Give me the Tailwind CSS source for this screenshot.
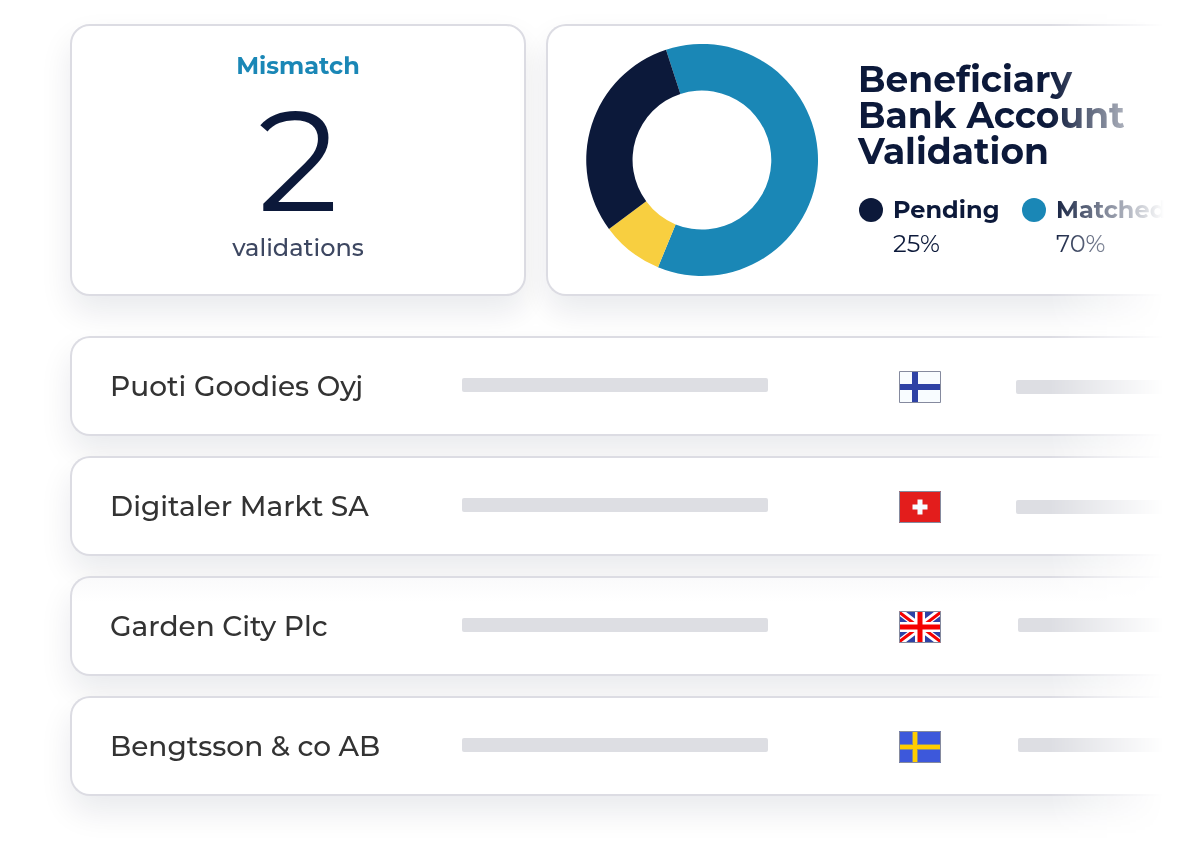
<!DOCTYPE html>
<html lang="en">
<head>
    <meta charset="UTF-8">
    <meta name="viewport" content="width=device-width, initial-scale=1.0">
    <title>Bank Account Validation</title>
    <script src="https://cdn.jsdelivr.net/npm/@tailwindcss/browser@4"></script>
</head>
<body class="bg-white font-['Montserrat','Inter',sans-serif] text-[#0c193a] overflow-x-hidden">
    <!-- Everything fades out towards the right edge -->
    <main class="pl-[70px] pt-6 pb-[60px] [mask-image:linear-gradient(to_right,black_calc(100%-142px),transparent_calc(100%-28px))]">
        <div class="flex gap-5">
            <section class="w-[456px] h-[272px] shrink-0 flex flex-col items-center bg-white border-2 border-[#dcdce3] rounded-[20px] pt-6 shadow-[0_16px_32px_rgba(12,25,58,0.09)]">
                <h2 class="text-2xl leading-8 font-bold text-[#1a87b6]">Mismatch</h2>
                <p class="mt-2 text-[142px] leading-[142px]">2</p>
                <p class="text-2xl leading-8 font-medium text-[#3d4761]">validations</p>
            </section>

            <section class="grow h-[272px] flex bg-white border-2 border-r-0 border-[#dcdce3] rounded-l-[20px] pl-[38px] shadow-[0_16px_32px_rgba(12,25,58,0.09)]">
                <svg class="size-[232px] shrink-0 mt-[18px]" viewBox="0 0 232 232" role="img" aria-label="Validation status">
                    <path fill="#1a87b6" d="M80 5.7A116 116 0 1 1 72 223.3L89.6 180.4A69.5 69.5 0 1 0 94.4 49.9Z"/>
                    <path fill="#f8cf40" d="M72 223.3A116 116 0 0 1 23 184.9L60.2 157.3A69.5 69.5 0 0 0 89.6 180.4Z"/>
                    <path fill="#0c193a" d="M23 184.9A116 116 0 0 1 80 5.7L94.4 49.9A69.5 69.5 0 0 0 60.2 157.3Z"/>
                </svg>
                <div class="ml-10 mt-[35px] whitespace-nowrap">
                    <h2 class="text-4xl leading-9 font-bold">Beneficiary<br>Bank Account<br>Validation</h2>
                    <dl class="mt-[25px] pl-px flex text-2xl leading-8">
                        <div class="w-[163px] shrink-0">
                            <dt class="flex items-center gap-[10px] font-bold"><span class="size-6 rounded-full bg-[#0c193a]"></span>Pending</dt>
                            <dd class="mt-[2px] pl-[34px]">25%</dd>
                        </div>
                        <div class="shrink-0">
                            <dt class="flex items-center gap-[10px] font-bold"><span class="size-6 rounded-full bg-[#1a87b6]"></span>Matched</dt>
                            <dd class="mt-[2px] pl-[34px]">70%</dd>
                        </div>
                    </dl>
                </div>
            </section>
        </div>

        <ul class="mt-10 flex flex-col gap-5 text-[28px] leading-9 font-medium text-[#333333]">
            <li class="h-[100px] grid grid-cols-[352px_437px_117px_1fr] items-center bg-white border-2 border-r-0 border-[#dcdce3] rounded-l-[20px] pl-[38px] shadow-[0_16px_32px_rgba(12,25,58,0.09)]">
                <span>Puoti Goodies Oyj</span>
                <span class="w-[306px] h-[14px] mb-[2px] rounded-xs bg-[#dddee3]"></span>
                <svg class="w-[42px] h-8 mt-[2px]" viewBox="0 0 42 32" role="img" aria-label="Finland">
                    <path fill="#f8fcff" d="M0 0h42v32H0z"/>
                    <path fill="#2e42a5" d="M13 0h6v32h-6zM0 13h42v6H0z"/>
                    <path fill="none" stroke="#858a9e" d="M.5.5h41v31H.5z"/>
                </svg>
                <span class="h-[14px] mt-[2px] rounded-l-xs bg-[#dddee3]"></span>
            </li>
            <li class="h-[100px] grid grid-cols-[352px_437px_117px_1fr] items-center bg-white border-2 border-r-0 border-[#dcdce3] rounded-l-[20px] pl-[38px] shadow-[0_16px_32px_rgba(12,25,58,0.09)]">
                <span>Digitaler Markt SA</span>
                <span class="w-[306px] h-[14px] mb-[2px] rounded-xs bg-[#dddee3]"></span>
                <svg class="w-[42px] h-8 mt-[2px]" viewBox="0 0 42 32" role="img" aria-label="Switzerland">
                    <path fill="#e31d1c" d="M0 0h42v32H0z"/>
                    <path fill="#f8fcff" d="M18.5 8.5h5v5h5v5h-5v5h-5v-5h-5v-5h5z"/>
                    <path fill="none" stroke="#858a9e" d="M.5.5h41v31H.5z"/>
                </svg>
                <span class="h-[14px] mt-[2px] rounded-l-xs bg-[#dddee3]"></span>
            </li>
            <li class="h-[100px] grid grid-cols-[352px_437px_119px_1fr] items-center bg-white bg-linear-to-b from-[#fafafb] to-white to-25% border-2 border-r-0 border-[#dcdce3] rounded-l-[20px] pl-[38px] shadow-[0_16px_32px_rgba(12,25,58,0.09)]">
                <span>Garden City Plc</span>
                <span class="w-[306px] h-[14px] mb-[2px] rounded-xs bg-[#dddee3]"></span>
                <svg class="w-[42px] h-8 mt-[2px]" viewBox="0 0 42 32" role="img" aria-label="United Kingdom">
                    <path fill="#2e42a5" d="M0 0h42v32H0z"/>
                    <path stroke="#fff" stroke-width="7" d="M0 0l42 32M42 0L0 32"/>
                    <path stroke="#f50100" stroke-width="3" d="M0 1l21 16M42 1L21 17M42 31L21 15M0 31l21-16"/>
                    <path fill="#fff" d="M16 0h10v32H16zM0 11h42v10H0z"/>
                    <path fill="#f50100" d="M18.5 0h5v32h-5zM0 13.5h42v5H0z"/>
                    <path fill="none" stroke="#858a9e" d="M.5.5h41v31H.5z"/>
                </svg>
                <span class="h-[14px] mb-[2px] rounded-l-xs bg-[#dddee3]"></span>
            </li>
            <li class="h-[100px] grid grid-cols-[352px_437px_119px_1fr] items-center bg-white border-2 border-r-0 border-[#dcdce3] rounded-l-[20px] pl-[38px] shadow-[0_16px_32px_rgba(12,25,58,0.09)]">
                <span>Bengtsson &amp; co AB</span>
                <span class="w-[306px] h-[14px] mb-[2px] rounded-xs bg-[#dddee3]"></span>
                <svg class="w-[42px] h-8 mt-[2px]" viewBox="0 0 42 32" role="img" aria-label="Sweden">
                    <path fill="#3d58db" d="M0 0h42v32H0z"/>
                    <path fill="#8c8f80" d="M13 0h6v32h-6zM0 13h42v6H0z"/>
                    <path fill="#ffcd00" d="M14 0h4v32h-4zM0 14h42v4H0z"/>
                    <path fill="none" stroke="#858a9e" d="M.5.5h41v31H.5z"/>
                </svg>
                <span class="h-[14px] mb-[2px] rounded-l-xs bg-[#dddee3]"></span>
            </li>
        </ul>
    </main>
</body>
</html>
